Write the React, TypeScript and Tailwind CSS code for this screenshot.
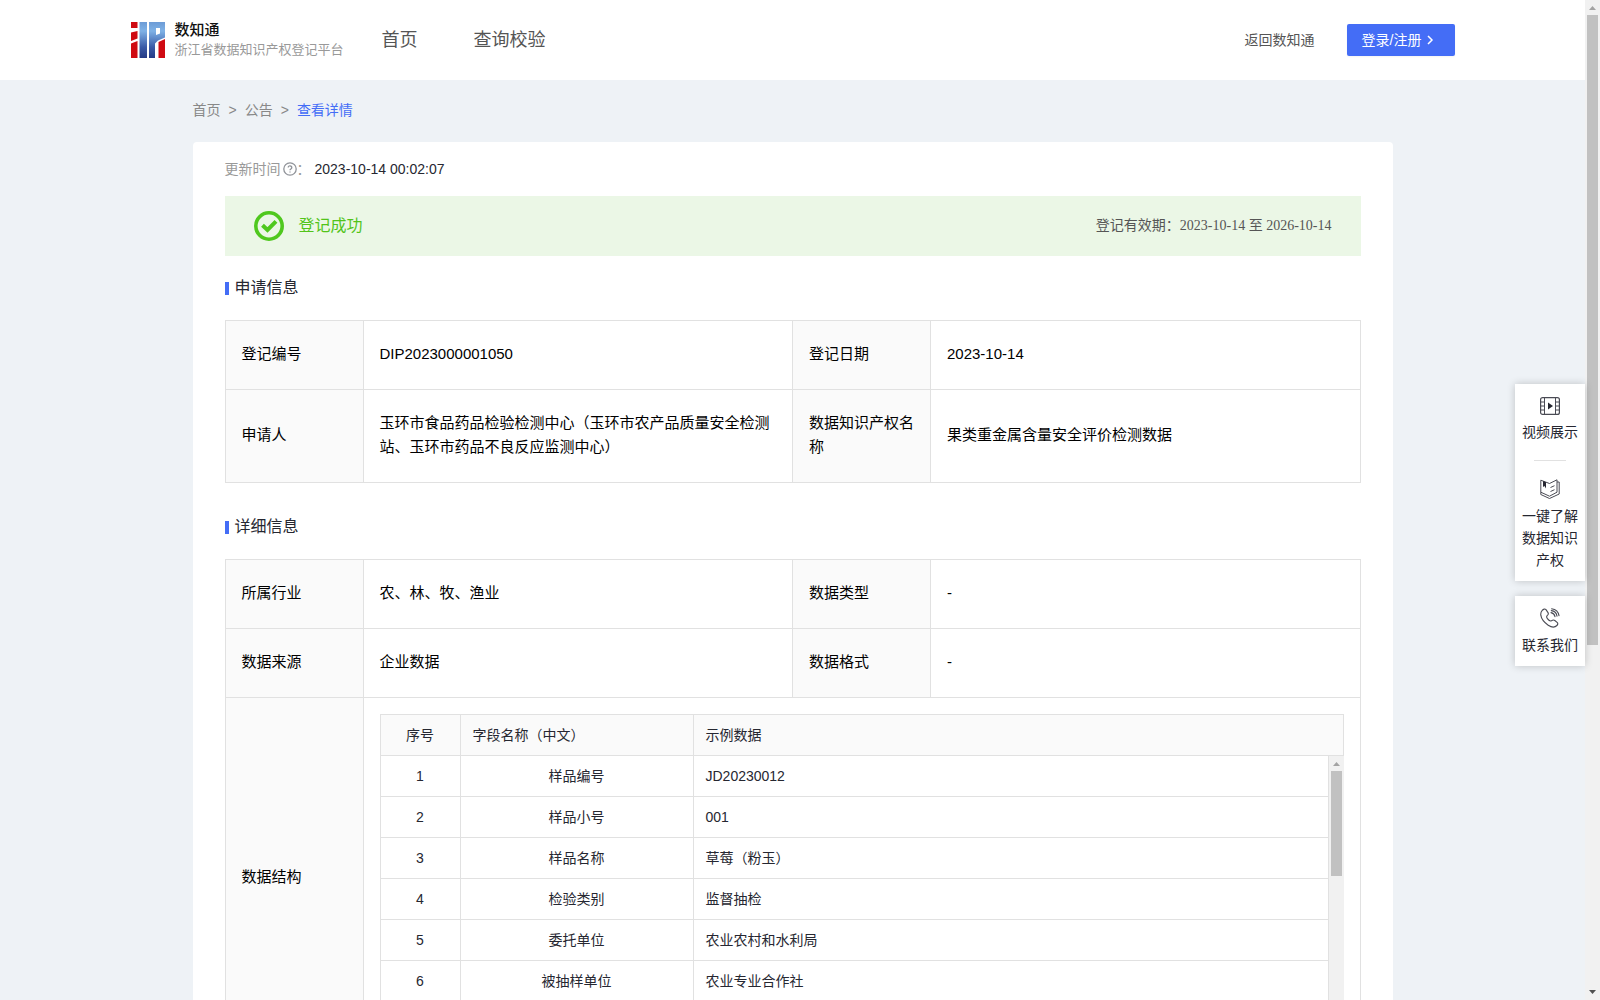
import { ReactNode } from 'react'

type SampleField = {
  name: string
  example: string
}

const sampleFields: SampleField[] = [
  { name: '样品编号', example: 'JD20230012' },
  { name: '样品小号', example: '001' },
  { name: '样品名称', example: '草莓（粉玉）' },
  { name: '检验类别', example: '监督抽检' },
  { name: '委托单位', example: '农业农村和水利局' },
  { name: '被抽样单位', example: '农业专业合作社' },
]

function Logo() {
  return (
    <svg width="34" height="36" viewBox="0 0 34 36" aria-hidden="true">
      <defs>
        <linearGradient
          id="logo-blue"
          gradientUnits="userSpaceOnUse"
          x1="0"
          y1="0"
          x2="0"
          y2="36"
        >
          <stop offset="0" stopColor="#6c9bd6" />
          <stop offset="0.25" stopColor="#7fb2e6" />
          <stop offset="0.7" stopColor="#3a5aa6" />
          <stop offset="1" stopColor="#253a86" />
        </linearGradient>
      </defs>
      <path d="M0 0h6.500v6H0zM0 10.500l6.500-1.500v7.500L0 19zM0 21.500l6.500-2.500v17H0z" fill="#cf0a12" />
      <path d="M8.500 0h7.500v36H8.500z" fill="url(#logo-blue)" />
      <path
        d="M18 0h16v15.500l-7 3-3 3V36h-6zM25 6v7l4-1.500V6z"
        fill="url(#logo-blue)"
        fillRule="evenodd"
      />
      <path d="M27.500 20l6.500-3v19h-6.500z" fill="#cf0a12" />
    </svg>
  )
}

function HelpIcon() {
  return (
    <svg
      width="14"
      height="14"
      viewBox="0 0 14 14"
      fill="none"
      stroke="#909399"
      strokeWidth="1.300"
      aria-hidden="true"
    >
      <circle cx="7" cy="7" r="6.200" />
      <path d="M5.200 5.500a1.800 1.700 0 1 1 2.700 1.500c-.6.400-.9.700-.9 1.300M7 9.400v1.200" />
    </svg>
  )
}

function SuccessIcon() {
  return (
    <svg
      width="30"
      height="30"
      viewBox="0 0 30 30"
      fill="none"
      stroke="#4fc81e"
      aria-hidden="true"
    >
      <circle cx="15" cy="15" r="13.200" strokeWidth="3.600" />
      <path d="M8.500 14.200l5 4.800 8.500-8.600" strokeWidth="4" />
    </svg>
  )
}

function VideoIcon() {
  return (
    <svg
      width="20"
      height="18"
      viewBox="0 0 20 18"
      fill="none"
      stroke="#4a4b54"
      aria-hidden="true"
    >
      <rect x=".6" y=".6" width="18.800" height="16.800" rx="2" strokeWidth="1.200" />
      <path d="M4.500.5v17M15.500.5v17M.5 5h4M.5 9h4M.5 13h4M15.500 5h4M15.500 9h4M15.500 13h4" />
      <path d="M8 5.500l5 3.500-5 3.500z" fill="#262731" stroke="none" />
    </svg>
  )
}

function BookIcon() {
  return (
    <svg
      width="20"
      height="20"
      viewBox="0 0 20 20"
      fill="none"
      stroke="#4a4b54"
      strokeLinejoin="round"
      aria-hidden="true"
    >
      <path d="M.8 1.200L9.500 4.500 17 .8v12.400l-7.500 4-8.700-4z" />
      <path d="M.8 13.200v2.300l8.700 4 9.700-4.500V3H17M10.500 8.500l4-1.800M10.500 12.500l4-1.800" />
      <path d="M3 2v6l1.500-1L6 9.500V3.200z" fill="#262731" stroke="none" />
    </svg>
  )
}

function PhoneIcon() {
  return (
    <svg
      width="20"
      height="20"
      viewBox="0 0 20 20"
      fill="none"
      stroke="#4a4b54"
      strokeWidth="1.100"
      strokeLinecap="round"
      strokeLinejoin="round"
      aria-hidden="true"
    >
      <path d="M2.200 2.400C3.400 1 5 .6 6 1.600l2 3c.6 1 .3 2-.6 2.800-1.200 1-.9 2 0 3.200 1.300 1.700 2.600 2.800 4 2.200 1.300-.8 2.400-1.100 3.400-.3l2.300 1.900c1 .9.900 2-.2 3.100-2 2-5.200 2-8.700-.3C4.600 14.800 1.400 11 .8 7.200.6 5.300 1 3.700 2.200 2.400z" />
      <path d="M11 4.600c2.300.4 3.600 1.800 4 4M11.300 2.600c3.200.4 5.200 2.500 5.700 5.500M11.600.7c4.200.5 6.800 3 7.400 7" />
    </svg>
  )
}

function ScrollRail({ thumb, down }: { thumb: string; down?: boolean }) {
  return (
    <div
      className="flex w-[15px] shrink-0 flex-col items-center justify-between bg-[#f1f1f1]"
      aria-hidden="true"
    >
      <div className="flex h-full w-full flex-col items-center">
        <svg width="15" height="15" viewBox="0 0 15 15" className="shrink-0">
          <path d="M4 10h7L7.500 6z" fill="#a3a3a3" />
        </svg>
        <div className={`w-[11px] bg-[#c1c1c1] ${thumb}`} />
      </div>
      {down && (
        <svg width="15" height="15" viewBox="0 0 15 15" className="shrink-0">
          <path d="M4 5h7L7.500 9z" fill="#505050" />
        </svg>
      )}
    </div>
  )
}

function Header() {
  return (
    <header className="bg-white">
      <div className="mx-auto flex h-20 max-w-[1324px] items-center">
        <a href="#" className="flex w-[251px] items-center gap-2.5">
          <Logo />
          <span className="flex flex-col whitespace-nowrap">
            <span className="text-[15px] leading-5 font-medium text-[#111]">
              数知通
            </span>
            <span className="text-[13px] leading-5 text-[#999]">
              浙江省数据知识产权登记平台
            </span>
          </span>
        </a>
        <nav className="flex gap-14 text-lg text-[#555]">
          <a href="#">首页</a>
          <a href="#">查询校验</a>
        </nav>
        <div className="ml-auto flex items-center gap-8 text-sm">
          <a href="#" className="text-[#555]">
            返回数知通
          </a>
          <button
            type="button"
            className="flex h-8 w-[108px] items-center gap-1 rounded-xs bg-[#446df6] pl-[15px] text-white shadow-xs"
          >
            登录/注册
            <svg
              width="10"
              height="10"
              viewBox="0 0 10 10"
              fill="none"
              stroke="currentColor"
              strokeWidth="1.500"
              aria-hidden="true"
            >
              <path d="M3 1l4 4-4 4" />
            </svg>
          </button>
        </div>
      </div>
    </header>
  )
}

function SectionTitle({ children }: { children: ReactNode }) {
  return (
    <h2 className="flex items-center gap-1.5 text-base leading-6 text-[#262731]">
      <span className="h-[13px] w-1 bg-[#446df6]" />
      {children}
    </h2>
  )
}

function LabelCell({ children }: { children: ReactNode }) {
  return (
    <th
      scope="row"
      className="border border-[#e1e1e1] bg-[#fafafa] px-4 pt-[21px] pb-[23px] text-left font-normal"
    >
      {children}
    </th>
  )
}

function ValueCell({ children }: { children: ReactNode }) {
  return (
    <td className="border border-[#e1e1e1] px-4 pt-[21px] pb-[23px]">
      {children}
    </td>
  )
}

function InfoTable({ children }: { children: ReactNode }) {
  return (
    <table className="w-full table-fixed border-collapse text-[15px] leading-6 text-black">
      <colgroup>
        <col className="w-[138px]" />
        <col />
        <col className="w-[138px]" />
        <col />
      </colgroup>
      <tbody>{children}</tbody>
    </table>
  )
}

function FieldColumns() {
  return (
    <colgroup>
      <col className="w-20" />
      <col className="w-[233px]" />
      <col />
    </colgroup>
  )
}

function FieldTable() {
  return (
    <div className="text-sm leading-5 text-[#262731]">
      <table className="w-full table-fixed border-collapse bg-[#fafafa]">
        <FieldColumns />
        <thead>
          <tr className="h-[41px]">
            <th className="border border-[#e1e1e1] font-normal">序号</th>
            <th className="border border-[#e1e1e1] px-3 text-left font-normal">
              字段名称（中文）
            </th>
            <th className="border border-[#e1e1e1] px-3 text-left font-normal">
              示例数据
            </th>
          </tr>
        </thead>
      </table>
      <div className="flex h-[286px] overflow-hidden">
        <div className="flex-1">
          <table className="-mt-px w-full table-fixed border-collapse text-center">
            <FieldColumns />
            <tbody>
              {sampleFields.map((field, index) => (
                <tr key={field.name} className="h-[41px]">
                  <td className="border border-[#e1e1e1]">{index + 1}</td>
                  <td className="border border-[#e1e1e1] px-3">{field.name}</td>
                  <td className="border border-[#e1e1e1] px-3 text-left">
                    {field.example}
                  </td>
                </tr>
              ))}
            </tbody>
          </table>
        </div>
        <ScrollRail thumb="h-[105px]" />
      </div>
    </div>
  )
}

function SideTools() {
  return (
    <aside className="absolute top-96 right-[15px] flex w-[70px] flex-col gap-[15px] text-center text-sm leading-[22px] text-[#262731]">
      <div className="flex flex-col items-center bg-white pt-[13px] pb-2.5 shadow-[0_0_8px_rgba(0,0,0,0.2)]">
        <a href="#" className="flex flex-col items-center gap-1.5">
          <VideoIcon />
          视频展示
        </a>
        <span className="mt-[17px] mb-[18px] h-px w-8 bg-[#e1e1e1]" />
        <a href="#" className="flex flex-col items-center gap-1.5 px-[7px]">
          <BookIcon />
          一键了解数据知识产权
        </a>
      </div>
      <div className="bg-white pt-3 pb-2.5 shadow-[0_0_8px_rgba(0,0,0,0.2)]">
        <a href="#" className="flex flex-col items-center gap-1.5">
          <PhoneIcon />
          联系我们
        </a>
      </div>
    </aside>
  )
}

export default function App() {
  return (
    <div className="relative flex h-screen overflow-hidden bg-[#eef2f6] font-['Liberation_Sans','Noto_Sans_CJK_SC',sans-serif]">
      <div className="flex-1 overflow-y-auto [scrollbar-width:none]">
        <Header />
        <main className="mx-auto max-w-[1200px]">
          <nav
            aria-label="breadcrumb"
            className="flex gap-2 pt-5 pb-[22px] text-sm leading-5 text-[#888]"
          >
            <a href="#">首页</a>
            <span>&gt;</span>
            <a href="#">公告</a>
            <span>&gt;</span>
            <a href="#" className="text-[#446df6]">
              查看详情
            </a>
          </nav>

          <div className="rounded-sm bg-white px-8 pb-8">
            <p className="flex h-[54px] items-center text-sm text-[#999]">
              更新时间
              <span className="ml-0.5">
                <HelpIcon />
              </span>
              ：<span className="ml-1 text-[#262731]">2023-10-14 00:02:07</span>
            </p>

            <div className="flex h-[60px] items-center bg-[#ebf7e6] px-[29px]">
              <SuccessIcon />
              <span className="ml-[15px] text-base text-[#52c41a]">
                登记成功
              </span>
              <span className="ml-auto font-['Liberation_Serif','Noto_Sans_CJK_SC',serif] text-sm text-[#555]">
                登记有效期：2023-10-14 至 2026-10-14
              </span>
            </div>

            <section className="pt-5">
              <SectionTitle>申请信息</SectionTitle>
              <div className="pt-5">
                <InfoTable>
                  <tr>
                    <LabelCell>登记编号</LabelCell>
                    <ValueCell>DIP2023000001050</ValueCell>
                    <LabelCell>登记日期</LabelCell>
                    <ValueCell>2023-10-14</ValueCell>
                  </tr>
                  <tr>
                    <LabelCell>申请人</LabelCell>
                    <ValueCell>
                      玉环市食品药品检验检测中心（玉环市农产品质量安全检测站、玉环市药品不良反应监测中心）
                    </ValueCell>
                    <LabelCell>数据知识产权名称</LabelCell>
                    <ValueCell>果类重金属含量安全评价检测数据</ValueCell>
                  </tr>
                </InfoTable>
              </div>
            </section>

            <section className="pt-8">
              <SectionTitle>详细信息</SectionTitle>
              <div className="pt-5">
                <InfoTable>
                  <tr>
                    <LabelCell>所属行业</LabelCell>
                    <ValueCell>农、林、牧、渔业</ValueCell>
                    <LabelCell>数据类型</LabelCell>
                    <ValueCell>-</ValueCell>
                  </tr>
                  <tr>
                    <LabelCell>数据来源</LabelCell>
                    <ValueCell>企业数据</ValueCell>
                    <LabelCell>数据格式</LabelCell>
                    <ValueCell>-</ValueCell>
                  </tr>
                  <tr>
                    <LabelCell>数据结构</LabelCell>
                    <td colSpan={3} className="border border-[#e1e1e1] p-4">
                      <FieldTable />
                    </td>
                  </tr>
                </InfoTable>
              </div>
            </section>
          </div>
        </main>
      </div>
      <ScrollRail thumb="h-[64%]" down />
      <SideTools />
    </div>
  )
}
